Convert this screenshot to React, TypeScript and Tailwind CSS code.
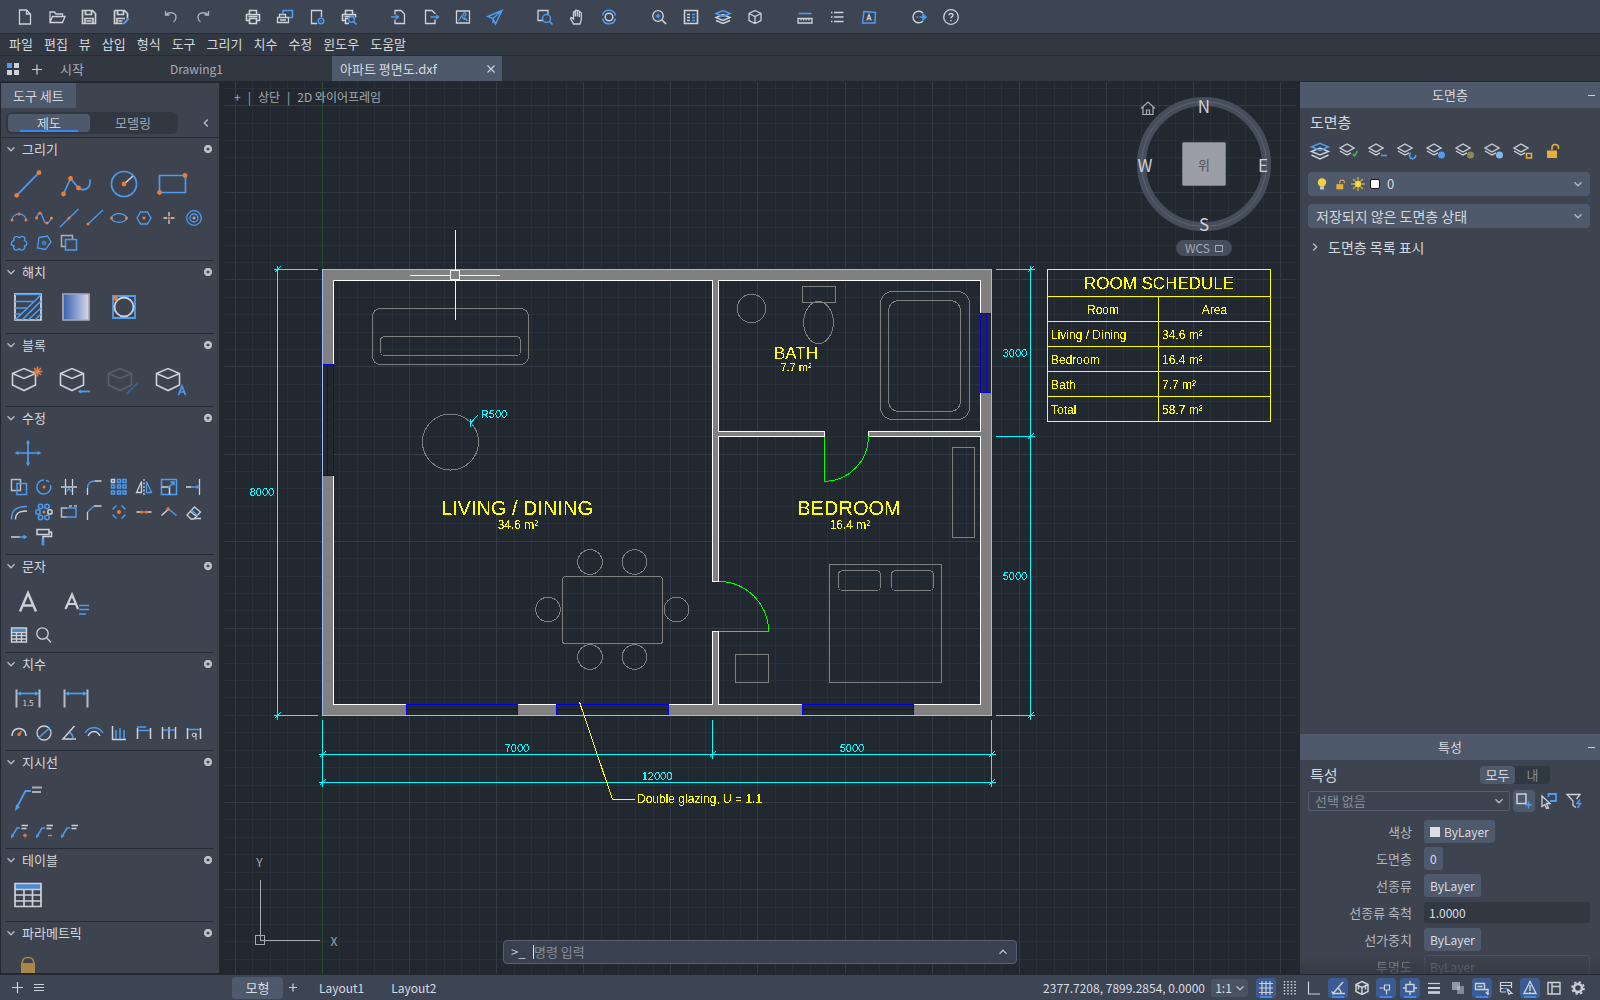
import { useState, type ReactNode } from "react";

const W = "#cdd2d9";
const B = "#4c9cf0";
const O = "#f07b36";
const Y = "#e6b03c";

type IconProps = { size?: number; sw?: number; children: ReactNode };

const Icon = ({ size = 16, sw = 1.3, children }: IconProps) => (
  <svg
    width={size}
    height={size}
    viewBox={`0 0 ${size} ${size}`}
    fill="none"
    stroke={W}
    strokeWidth={sw}
    className="shrink-0 overflow-visible"
    aria-hidden="true"
  >
    {children}
  </svg>
);

const Dot = ({ x, y, r = 2.4 }: { x: number; y: number; r?: number }) => (
  <circle cx={x} cy={y} r={r} fill={O} stroke="none" />
);

const Chevron = ({ d }: { d: string }) => (
  <svg width="8" height="8" viewBox="0 0 8 8" fill="none" stroke="#b4bac4" strokeWidth="1.4" className="shrink-0" aria-hidden="true">
    <path d={d} />
  </svg>
);
const DOWN = "M.5 2.2L4 5.7 7.500 2.200";
const UP = "M.5 5.800L4 2.300 7.500 5.800";
const LEFT = "M5.800.5L2.300 4 5.800 7.500";
const RIGHT = "M2.200.5L5.700 4 2.200 7.500";

/* ---------- top toolbar ---------- */

const toolbar: { label: string; icon: ReactNode }[][] = [
  [
    { label: "새로 만들기", icon: <path d="M2.500 1h7l4 4v10h-11zM9.500 1v4h4" /> },
    { label: "열기", icon: <path d="M1 13.500V3h4.500l1.500 2h6.500v2M1 13.500L3.500 7.500H16l-2.500 6z" /> },
    { label: "저장", icon: <path d="M1.500 1.500h10l3 3v10h-13zM4.500 1.500v4h6v-4M4 14.500v-5h8v5M5.500 12h5" strokeWidth="1.700" /> },
    {
      label: "다른 이름으로 저장",
      icon: (
        <>
          <path d="M1.500 1.500h10l3 3v5M1.500 1.500v13h8M4.500 1.500v4h6v-4M4 14.500v-5h8M5.500 12h4" strokeWidth="1.700" />
          <path d="M15.500 9.500l-5 5.500" stroke={B} strokeWidth="2" />
        </>
      ),
    },
  ],
  [
    { label: "명령 취소", icon: <path d="M2.500 2v4h4M2.500 6C6 2.500 13 3 13 8.500c0 2-1 3.500-2.500 4.500" stroke="#aeb4bd" /> },
    { label: "명령 복구", icon: <path d="M13.500 2v4h-4M13.500 6C10 2.500 3 3 3 8.500c0 2 1 3.500 2.500 4.500" stroke="#aeb4bd" /> },
  ],
  [
    { label: "인쇄", icon: <path d="M4.500 5V1.500h7V5M4 11.500H1.500V5.500h13v6H12M4.500 9.500h7v5h-7zM3.500 7.500h9" strokeWidth="1.600" /> },
    {
      label: "일괄 인쇄",
      icon: (
        <>
          <path d="M2.500 8V5.500h6V8M.5 8.500h11v5H.5zM3 11h6" />
          <path d="M6 5.500V1.500h9.500v7H12" stroke={B} strokeWidth="1.600" />
        </>
      ),
    },
    {
      label: "페이지 설정",
      icon: (
        <>
          <path d="M8 14.500H2.500v-13h10V8" />
          <circle cx="12" cy="12" r="2.800" stroke={B} strokeWidth="1.500" />
          <circle cx="12" cy="12" r=".8" fill={B} stroke="none" />
        </>
      ),
    },
    {
      label: "인쇄 미리보기",
      icon: (
        <>
          <path d="M4.500 5V1.500h7V5M4 11.500H1.500V5.500h13v3M7 9.500H4.500v5H8M3.500 7.500h9" strokeWidth="1.600" />
          <circle cx="10.500" cy="10.500" r="2.800" stroke={B} />
          <path d="M12.500 12.500l3 3" stroke={B} strokeWidth="1.700" />
        </>
      ),
    },
  ],
  [
    {
      label: "가져오기",
      icon: (
        <>
          <path d="M4 5.500v-4h6l3.500 3.500v9.500H4v-4" />
          <path d="M0 8h7.500M5 6l2.500 2L5 10" stroke={B} />
        </>
      ),
    },
    {
      label: "내보내기",
      icon: (
        <>
          <path d="M12 5V4.500l-3-3H2.500v13H12v-4" />
          <path d="M7.500 8h8M13 6l2.500 2-2.500 2" stroke={B} />
        </>
      ),
    },
    {
      label: "이미지",
      icon: (
        <>
          <path d="M1.500 2h13v12h-13z" />
          <path d="M3.500 12l3-5 2.500 3 1-1 2.500 3" stroke={B} />
          <circle cx="9.500" cy="5.500" r="1.500" stroke={B} />
        </>
      ),
    },
    { label: "보내기", icon: <path d="M15 1.500L.8 7.500l5.200 2 2.500 5.500zM15 1.500L6 9.500v4.500" stroke={B} strokeWidth="1.500" /> },
  ],
  [
    {
      label: "줌 윈도우",
      icon: (
        <>
          <path d="M6 11.500H1v-10h10V5" />
          <circle cx="9.500" cy="9.500" r="4" stroke={B} strokeWidth="1.500" />
          <path d="M12.500 12.500l3 3" stroke={B} strokeWidth="1.700" />
        </>
      ),
    },
    { label: "초점이동", icon: <path d="M4.500 15C3.500 12 2 11 1.500 9.500c0-1.500 1.500-1 3 .5V3.500c0-1.300 1.800-1.300 1.800 0V7.500V2c0-1.300 2-1.300 2 0v5.500V2.500c0-1.300 2-1.300 2 0v5.500V4c0-1.300 2-1.300 2 0v6c0 2-.8 3-1.300 5z" /> },
    {
      label: "궤도",
      icon: (
        <>
          <circle cx="8" cy="8" r="3.800" strokeWidth="1.500" />
          <path d="M1.500 6.500C3-.5 13-.5 14.500 6.500M1.500 9.500c1.500 7 11.500 7 13 0" stroke={B} strokeWidth="1.500" />
        </>
      ),
    },
  ],
  [
    {
      label: "줌 확대",
      icon: (
        <>
          <circle cx="7" cy="7" r="5.300" />
          <path d="M11 11l4 4" strokeWidth="1.700" />
          <path d="M4.500 7h5M7 4.500v5" stroke={B} strokeWidth="1.500" />
        </>
      ),
    },
    {
      label: "특성",
      icon: (
        <>
          <path d="M1.500 1.500h13v13h-13z" strokeWidth="1.600" />
          <path d="M4 5.500h3M4 8.500h3M4 11.500h3" />
          <path d="M9 5.500h3M9 8.500h3M9 11.500h3" stroke={B} />
        </>
      ),
    },
    {
      label: "도면층",
      icon: (
        <>
          <path d="M1 8.500l7 3 7-3-7-3zM1 11.500l7 3 7-3" strokeWidth="1.500" />
          <path d="M1 4.500l7-3 7 3-7 3z" stroke={B} strokeWidth="1.600" />
        </>
      ),
    },
    { label: "블록", icon: <path d="M8 1.500l6 3v7l-6 3-6-3v-7zM2 4.500l6 3 6-3M8 7.500v7" /> },
  ],
  [
    {
      label: "측정",
      icon: (
        <>
          <path d="M1.500 4.500h13" stroke={B} strokeWidth="1.600" />
          <path d="M1 9.500h14v4.500H1zM4 9.500v2M6.700 9.500v2M9.300 9.500v2M12 9.500v2" />
        </>
      ),
    },
    { label: "목록", icon: <path d="M2 3.500h1.500M2 8h1.500M2 12.500h1.500M5 3.500h9.500M5 8h9.500M5 12.500h9.500" strokeWidth="1.400" /> },
    {
      label: "문자 스타일",
      icon: (
        <>
          <path d="M3 2.500l11.500 1-.5 10.500H1.500z" stroke={B} strokeWidth="1.500" />
          <path d="M5.800 11.500L8 5.500l2.200 6M6.500 9.700h3" strokeWidth="1.200" />
        </>
      ),
    },
  ],
  [
    {
      label: "공유",
      icon: (
        <>
          <path d="M12 4A5.800 5.800 0 1 0 12 12" strokeWidth="1.400" />
          <path d="M5.500 8h1.500M8.500 8h6M12 5.200L15 8l-3 2.800z" stroke={B} strokeWidth="1.500" />
        </>
      ),
    },
    {
      label: "도움말",
      icon: (
        <>
          <circle cx="8" cy="8" r="7.300" />
          <path d="M6 6.300c0-2.500 4-2.500 4 0 0 1.500-2 1.300-2 3M8 11v1.300" strokeWidth="1.400" />
        </>
      ),
    },
  ],
];

const menus = ["파일", "편집", "뷰", "삽입", "형식", "도구", "그리기", "치수", "수정", "윈도우", "도움말"];

/* ---------- tool set icons (28px and 18px) ---------- */

const Cube = ({ dim, children }: { dim?: boolean; children: ReactNode }) => (
  <Icon size={28} sw={1.6}>
    <g stroke={dim ? "#59616d" : W}>
      <path d="M-1.500 7.500l11.500-5 11.500 5v11.500l-11.500 5.500L-1.500 19zM-1.500 7.500L10 12.500l11.500-5" />
    </g>
    {children}
  </Icon>
);

const Leader = ({ tail }: { tail?: "+" | "-" }) => (
  <Icon size={18}>
    <path d="M1.500 15.500L7 6h3" stroke={B} strokeWidth="1.500" />
    <path d="M1 16l.5-4 3 2z" fill={B} stroke="none" />
    <path d="M11.500 3.500H18M11.500 6.500h5" />
    {tail && <path d={tail === "+" ? "M13 13.500h4M15 11.500v4" : "M13 13.500h4"} stroke={O} />}
  </Icon>
);

const DimBox = ({ children }: { children?: ReactNode }) => (
  <Icon size={28} sw={2}>
    <path d="M2.500 4.500v18M25.500 4.500v18" stroke="#b5bac3" />
    <path d="M3 8.500h22" stroke={B} strokeWidth="1.700" />
    <path d="M3 8.500l4-2.200v4.400zM25 8.500l-4-2.200v4.400z" fill={B} stroke="none" />
    {children}
  </Icon>
);

const TableIcon = ({ big }: { big?: boolean }) =>
  big ? (
    <Icon size={28} sw={1.7}>
      <path d="M1 3h26v5H1z" fill={B} fillOpacity=".8" stroke="none" />
      <path d="M1 2.500h26v23H1zM1 8.500h26M1 14h26M1 20h26M10 8.500v17M18.500 8.500v17" />
    </Icon>
  ) : (
    <Icon size={18} sw={1.4}>
      <path d="M1 2.500h16v3H1z" fill={B} fillOpacity=".8" stroke="none" />
      <path d="M1.500 2h15v14h-15zM1 6.500h16M1 9.500h16M1 13h16M6.500 6.500v9.500M11.500 6.500v9.500" />
    </Icon>
  );

type Section = { title: string; big: ReactNode[]; small: ReactNode[] };

const sections: Section[] = [
  {
    title: "그리기",
    big: [
      <Icon size={28}>
        <path d="M2.700 25.300L25 2.700" stroke={B} strokeWidth="1.700" />
        <Dot x={2.7} y={25.3} />
        <Dot x={25} y={2.7} />
      </Icon>,
      <Icon size={28}>
        <path d="M1.500 24L8.500 8.500l8 9.500c5 3.500 12.500 1.500 11.500-8.500" stroke={B} strokeWidth="1.700" />
        <Dot x={1.5} y={24} />
        <Dot x={8.5} y={8.5} />
        <Dot x={16.5} y={18} />
      </Icon>,
      <Icon size={28}>
        <circle cx="14" cy="14" r="12.500" stroke={B} strokeWidth="1.700" />
        <path d="M14 14l9-8" strokeWidth="1.600" />
        <Dot x={14} y={14} />
      </Icon>,
      <Icon size={28}>
        <path d="M1.500 5.500h26v17h-26z" stroke={B} strokeWidth="1.700" />
        <Dot x={27} y={5.5} />
        <Dot x={1.5} y={22.5} />
      </Icon>,
    ],
    small: [
      <Icon size={18}>
        <path d="M2 11c1-8 13-8 14 0" stroke={B} />
        <Dot x={2} y={11} r={1.5} />
        <Dot x={9} y={5} r={1.5} />
        <Dot x={16} y={11} r={1.5} />
      </Icon>,
      <Icon size={18}>
        <path d="M1.500 9C4 2 6 2 8 9s5 7 8.500 0" stroke={B} />
        <Dot x={1.5} y={9} r={1.5} />
        <Dot x={5} y={4} r={1.5} />
        <Dot x={12} y={14} r={1.5} />
        <Dot x={16.5} y={9} r={1.5} />
      </Icon>,
      <Icon size={18}>
        <path d="M0 18L18.500 0" stroke={B} />
        <Dot x={9} y={9} r={1.5} />
      </Icon>,
      <Icon size={18}>
        <path d="M3 15L18 1" stroke={B} />
        <Dot x={3} y={15} r={1.5} />
      </Icon>,
      <Icon size={18}>
        <ellipse cx="9" cy="9" rx="7.500" ry="4.300" stroke={B} />
        <Dot x={1.5} y={9} r={1.5} />
        <Dot x={16.5} y={9} r={1.5} />
      </Icon>,
      <Icon size={18}>
        <path d="M2 9l3.500-6h7L16 9l-3.500 6h-7z" stroke={B} />
        <Dot x={9} y={9} r={1.5} />
      </Icon>,
      <Icon size={18}>
        <path d="M9 3v4M9 11v4M3.500 9h3.500M11 9h3.500" />
        <Dot x={9} y={9} r={1.5} />
      </Icon>,
      <Icon size={18}>
        <circle cx="9" cy="9" r="7.300" stroke={B} />
        <circle cx="9" cy="9" r="4" stroke={B} />
        <path d="M9 7.500v3M7.500 9h3" strokeWidth="1" />
      </Icon>,
      <Icon size={18}>
        <path
          d="M4 6.500C2.500 3.500 6.500 1 8.500 3.500 9 3.800 9.500 3.800 10 3.500c2-2.500 6-.5 4.500 3 3 1 3 5 0 5.500 1 3.500-3 5.500-5 3H8.500c-2 2.500-6 .5-4.500-3-3.500-.5-3.500-4.500 0-5.500z"
          stroke={B}
        />
      </Icon>,
      <Icon size={18}>
        <path d="M4 3.500L12.500 2 16 8l-5.500 7.500L2.500 14z" stroke={B} />
        <circle cx="9" cy="9" r="2.500" fill={B} fillOpacity=".55" stroke="none" />
      </Icon>,
      <Icon size={18} sw={1.5}>
        <path d="M5.500 12.500H1.500v-11h11v4" stroke="#aab0b9" />
        <path d="M5.500 5.500h11v10.500h-11z" stroke={B} />
      </Icon>,
    ],
  },
  {
    title: "해치",
    big: [
      <Icon size={28} sw={1.7}>
        <path d="M1 1h26v26H1z" stroke="#d8dde4" />
        <path d="M1 1.500h26M1 8.500h20M1 15h13M1 21h7M1 27L27 2M8 27L27 8M14 27L27 15M21 27l6-6" stroke={B} />
      </Icon>,
      <Icon size={28} sw={1.7}>
        <defs>
          <linearGradient id="hatch-gradient">
            <stop offset="0" stopColor="#3560b0" />
            <stop offset="1" stopColor="#dcd8ee" />
          </linearGradient>
        </defs>
        <path d="M1 1h26v26H1z" fill="url(#hatch-gradient)" stroke="#a6abb5" />
      </Icon>,
      <Icon size={28} sw={1.8}>
        <path d="M3 3h22v22H3z" stroke={B} />
        <circle cx="14" cy="14" r="9.500" />
        <Dot x={5.5} y={5.5} />
      </Icon>,
    ],
    small: [],
  },
  {
    title: "블록",
    big: [
      <Cube>
        <path d="M23.500.5v10M18.500 5.500h10M20 2l7 7M27 2l-7 7" stroke={O} strokeWidth="1.500" />
      </Cube>,
      <Cube>
        <path d="M17 25.500h11" stroke={B} strokeWidth="1.800" />
        <path d="M15.500 25.500l4-2v4z" fill={B} stroke="none" />
      </Cube>,
      <Cube dim>
        <path d="M16.500 28L28 16.500" stroke="#3f6291" strokeWidth="1.700" />
      </Cube>,
      <Cube>
        <path d="M20.500 29l3.500-9 3.500 9M21.700 26h4.600" stroke={B} strokeWidth="1.700" />
      </Cube>,
    ],
    small: [],
  },
  {
    title: "수정",
    big: [
      <Icon size={28}>
        <path d="M14 3v22M3 14h22" stroke={B} strokeWidth="1.700" />
        <path d="M14 .5l2 4h-4zM14 27.500l2-4h-4zM.5 14l4-2v4zM27.500 14l-4-2v4z" fill={B} stroke="none" />
      </Icon>,
    ],
    small: [
      <Icon size={18} sw={1.5}>
        <path d="M1.500 1.500h9v11h-9z" stroke="#b7bcc5" />
        <path d="M7 5.500h9.500v11H7z" stroke={B} />
      </Icon>,
      <Icon size={18}>
        <path d="M9 2A7 7 0 1 0 15.500 7M11 2.300A7 7 0 0 1 14 4" stroke={B} strokeWidth="1.500" />
        <Dot x={9} y={9} r={1.5} />
      </Icon>,
      <Icon size={18}>
        <path d="M1 9h16M5.500 1v7M12.500 1v7M5.500 10v7M12.500 10v7" />
        <path d="M6.500 13.500L9 10.500l2.500 3" stroke={B} />
      </Icon>,
      <Icon size={18}>
        <path d="M2.500 17V10M10 3h6.500" />
        <path d="M2.500 10c0-4.500 3-7 7.500-7" stroke={B} />
      </Icon>,
      <Icon size={18} sw={1.5}>
        <path
          d="M7.500 1.500h3v3h-3zM13 1.500h3v3h-3zM1.500 7h3v3h-3zM7.500 7h3v3h-3zM13 7h3v3h-3zM1.500 13h3v3h-3zM7.500 13h3v3h-3zM13 13h3v3h-3z"
          stroke={B}
        />
        <path d="M1.500 1.500h3v3h-3z" />
      </Icon>,
      <Icon size={18}>
        <path d="M6.500 3.500v11H1.500z" />
        <path d="M11.500 3.500v11h5z" stroke={B} />
        <path d="M9 1v16" strokeDasharray="2 1.500" />
      </Icon>,
      <Icon size={18} sw={1.5}>
        <path d="M1.500 1.500h15v15h-15z" stroke={B} />
        <path d="M1.500 9h8v7.500" />
        <path d="M8 10l6-6M10.500 4H14v3.500" stroke={B} />
      </Icon>,
      <Icon size={18}>
        <path d="M1 9h5M14.500 1v16" />
        <path d="M6 9h8M11.500 7.500l2.500 1.500-2.500 1.500" stroke={B} />
      </Icon>,
      <Icon size={18}>
        <path d="M1.500 16.500C1.500 8 5 3.500 17 3.500" stroke={B} strokeWidth="1.500" />
        <path d="M5.500 16.500c0-6 3-8.500 11.500-8.500" />
      </Icon>,
      <Icon size={18}>
        <g stroke={B} strokeWidth="1.500">
          <circle cx="3" cy="9" r="2.200" />
          <circle cx="5.500" cy="3.500" r="2.200" />
          <circle cx="12" cy="3.500" r="2.200" />
          <circle cx="5.500" cy="14.500" r="2.200" />
          <circle cx="12" cy="14.500" r="2.200" />
        </g>
        <circle cx="15" cy="9" r="2.200" strokeWidth="1.500" />
        <Dot x={9} y={9} r={1.5} />
      </Icon>,
      <Icon size={18} sw={1.5}>
        <path d="M7 5H1.500v9H7M9 3h3M14 3h3" stroke="#b7bcc5" />
        <path d="M6 14h10V5H7" stroke={B} />
      </Icon>,
      <Icon size={18}>
        <path d="M2.500 17V9M9 3h7.500" />
        <path d="M2.500 9L9 3" stroke={B} />
      </Icon>,
      <Icon size={18}>
        <path d="M2.500 6.500l4-4M11.500 2.500l4 4M2.500 11.500l4 4M11.500 15.500l4-4" stroke={B} strokeWidth="1.500" />
        <Dot x={9} y={9} r={2} />
      </Icon>,
      <Icon size={18}>
        <path d="M1.500 9h4M12.500 9h4" />
        <path d="M6 9h6" stroke={O} />
        <Dot x={6.5} y={9} r={1.5} />
        <Dot x={11.5} y={9} r={1.5} />
      </Icon>,
      <Icon size={18}>
        <path d="M1.500 12.500L8.500 6" strokeWidth="1.500" />
        <path d="M8.500 6l8 6.500" stroke={B} strokeWidth="1.500" />
        <Dot x={8} y={6} r={1.7} />
      </Icon>,
      <Icon size={18}>
        <path d="M9.500 4l6 5-6.500 7H6l-4-4zM5.500 8.500l6 5M9 15.500h7" />
        <path d="M6.500 7l6 5.500" stroke={B} />
      </Icon>,
      <Icon size={18}>
        <path d="M1 9h9" strokeWidth="1.500" />
        <path d="M9 9h7.500M13.500 7.500L16 9l-2.500 1.500" stroke={B} strokeWidth="1.500" />
      </Icon>,
      <Icon size={18} sw={1.5}>
        <path d="M2 1.500h12v5H2zM14 4h2.500v4.500H8V11" />
        <path d="M8 10.500v7" stroke={B} strokeWidth="2.600" />
      </Icon>,
    ],
  },
  {
    title: "문자",
    big: [
      <Icon size={28} sw={2.4}>
        <path d="M6 24.500L14 6l8 18.500M8.500 18.500h11" />
      </Icon>,
      <Icon size={28} sw={2.2}>
        <path d="M3.500 22L10 7.500 16 22M6 17h8" />
        <path d="M17 18.500h10M17 22.500h10M17 27h7" stroke={B} strokeWidth="1.700" />
      </Icon>,
    ],
    small: [
      <TableIcon />,
      <Icon size={18}>
        <circle cx="7.500" cy="7.500" r="5.700" />
        <path d="M11.500 11.500l4.500 5" />
      </Icon>,
    ],
  },
  {
    title: "치수",
    big: [
      <DimBox>
        <text x="14" y="21" textAnchor="middle" fontSize="8" fill={W} stroke="none">
          1.5
        </text>
      </DimBox>,
      <DimBox />,
    ],
    small: [
      <Icon size={18} sw={1.5}>
        <path d="M2 12C1.500 2 16.500 2 16 12" />
        <path d="M9 10l2.500-3" stroke={O} />
        <Dot x={9} y={10.5} r={1.7} />
      </Icon>,
      <Icon size={18}>
        <circle cx="9" cy="9" r="7" />
        <path d="M3.500 14L14.500 4" stroke={B} strokeWidth="1.500" />
      </Icon>,
      <Icon size={18} sw={1.5}>
        <path d="M14.500 2L3 15h13" />
        <path d="M9.500 8.500c2.500 1.500 3.500 3 3.500 6" stroke={B} />
      </Icon>,
      <Icon size={18} sw={1.5}>
        <path d="M0 9c4-7 14-7 18 0" stroke={B} />
        <path d="M3 12c3-6 9-6 12 0" />
      </Icon>,
      <Icon size={18} sw={1.5}>
        <path d="M2.500 2v13.500H16" />
        <path d="M6 6v9M10 4v11M14 6v9" stroke={B} />
      </Icon>,
      <Icon size={18} sw={1.5}>
        <path d="M2.500 4v11M15.500 4v11" />
        <path d="M2 3h9M3 6.500h12" stroke={B} />
      </Icon>,
      <Icon size={18} sw={1.5}>
        <path d="M2.500 3v12M9 3v12M15.500 3v12" />
        <path d="M3 6h12" stroke={B} />
      </Icon>,
      <Icon size={18} sw={1.5}>
        <path d="M2.500 4v11M15.500 4v11" />
        <path d="M3 5.500h12" stroke={B} />
        <circle cx="9" cy="11" r="1.800" strokeWidth="1" />
        <path d="M11 9v7" strokeWidth="1" />
      </Icon>,
    ],
  },
  {
    title: "지시선",
    big: [
      <Icon size={28} sw={1.8}>
        <path d="M3 24L11.500 8H17" stroke={B} />
        <path d="M1 28l1-6.500 4 2.500z" fill={B} stroke="none" />
        <path d="M18 4.500h10M18 9h9" stroke="#aab0b9" />
      </Icon>,
    ],
    small: [<Leader tail="+" />, <Leader tail="-" />, <Leader />],
  },
  { title: "테이블", big: [<TableIcon big />], small: [] },
  {
    title: "파라메트릭",
    big: [
      <Icon size={28} sw={1.7}>
        <path d="M8 9.500c0-8 12-8 12 0" stroke="#a98744" />
        <path d="M7 9h14v11.500H7z" fill="#a98744" stroke="none" />
      </Icon>,
    ],
    small: [],
  },
];

const ToolSection = ({ title, big, small }: Section) => (
  <section className="flex shrink-0 flex-col">
    <div className="flex h-6 items-center pb-0.5 pl-1.5 pr-[7px]">
      <button type="button" className="flex flex-1 items-center gap-[7px] text-left">
        <Chevron d={DOWN} />
        {title}
      </button>
      <button type="button" aria-label={`${title} 설정`}>
        <svg width="8" height="8" viewBox="0 0 8 8" fill="none" stroke="#bcc1c9" aria-hidden="true">
          <path d="M2.800 1.400h2.400L6.600 2.800v2.400L5.200 6.600H2.800L1.400 5.200V2.800z" strokeWidth="2.600" />
        </svg>
      </button>
    </div>
    <div className="flex h-[43px] pl-[3px]">
      {big.map((icon, i) => (
        <button key={i} type="button" className="grid w-12 place-items-center" aria-label={`${title} ${i + 1}`}>
          {icon}
        </button>
      ))}
    </div>
    <div className="flex flex-wrap pl-[5px]">
      {small.map((icon, i) => (
        <button key={i} type="button" className="grid size-[25px] place-items-center" aria-label={`${title} 도구 ${i + 1}`}>
          {icon}
        </button>
      ))}
    </div>
    <div className="mx-[5px] mt-[5px] h-px bg-[#262c36]" />
  </section>
);

const Sidebar = () => {
  const [tab, setTab] = useState("제도");
  return (
    <aside className="my-px ml-px flex w-[218px] shrink-0 flex-col overflow-hidden bg-[#3d4450]">
      <div className="flex h-[25px] shrink-0">
        <button type="button" className="bg-[#4e596b] px-3">
          도구 세트
        </button>
      </div>
      <div className="flex h-[30px] shrink-0 items-center justify-between border-b border-[#262c36] pl-[5px] pr-[9px]">
        <div className="grid h-[22px] w-[172px] grid-cols-[82px_1fr] rounded-md bg-[#323842] p-0.5">
          {["제도", "모델링"].map((name) => (
            <button
              key={name}
              type="button"
              onClick={() => setTab(name)}
              className={
                tab === name
                  ? "relative rounded-[4px] bg-[#4e596b] leading-4 after:absolute after:inset-x-3 after:bottom-0 after:h-0.5 after:bg-[#3b86f6]"
                  : "leading-4 text-[#a3a9b3]"
              }
            >
              {name}
            </button>
          ))}
        </div>
        <button type="button" aria-label="접기">
          <Chevron d={LEFT} />
        </button>
      </div>
      {sections.map((s) => (
        <ToolSection key={s.title} {...s} />
      ))}
    </aside>
  );
};

/* ---------- drawing ---------- */

const STEP = 17.42;
const gridX = Array.from({ length: 140 }, (_, i) => i - 6);
const gridY = Array.from({ length: 90 }, (_, i) => i - 54);

const Grid = () => (
  <g strokeWidth="1">
    {[false, true].map((major) => (
      <g key={String(major)} stroke={major ? "#333b47" : "#29303a"}>
        {gridX
          .filter((i) => (i % 5 === 0) === major)
          .map((i) => (
            <path key={`x${i}`} d={`M${Math.floor(322.4 + i * STEP) + 0.5} 82v2000`} />
          ))}
        {gridY
          .filter((i) => (i % 5 === 0) === major)
          .map((i) => (
            <path key={`y${i}`} d={`M224 ${Math.floor(715.4 + i * STEP) + 0.5}h3000`} />
          ))}
      </g>
    ))}
    <path d="M224 715.500h3000" stroke="#4b262b" />
    <path d="M322.500 82v2000" stroke="#2a4a2b" />
  </g>
);

const Tick = ({ x, y }: { x: number; y: number }) => (
  <path d={`M${x - 4} ${y}h8M${x} ${y - 4}v8M${x - 3} ${y + 3}l6 -6`} />
);

const chairs = [
  [590, 562],
  [634.5, 562],
  [548, 609.5],
  [676.5, 609.5],
  [590, 657],
  [634.5, 657],
];

const FloorPlan = () => (
  <>
    <g stroke="none" fill="#808080">
      <path d="M322 269h670v447H322zM334 281v423h647V281z" fillRule="evenodd" />
      <path d="M713 281h5v300h-5zM713 632h5v73h-5zM718 432h106v4H718zM869 432h112v4H869z" />
    </g>
    <g fill="none" stroke="#fff">
      <path d="M712.500 280.500H333.500V704.500H712.500V631.500h6V704.500H980.500V436.500H868.500V431.500H980.500V280.500H718.500V431.500H824.500V436.500H718.500V581.500H712.500z" />
    </g>
    {/* windows */}
    <g fill="#212830" stroke="#0000e0">
      <path d="M322.500 364.500h11v111h-11zM327.500 364.500v111" />
      <path d="M980.500 313.500h11v79h-11zM986.500 313.500v79" />
      <path d="M406.500 704.500h111v11h-111zM406.500 709.500h111" />
      <path d="M556.500 704.500h112v11h-112zM556.500 709.500h112" />
      <path d="M802.500 704.500h111v11h-111zM802.500 709.500h111" />
    </g>
    <path d="M322.500 269.500h669v446h-669z" fill="none" stroke="#9dbcf5" />
    {/* doors */}
    <g fill="none" stroke="#00ff00">
      <path d="M718.500 631.500h50A50 50 0 0 0 718.500 581.500" />
      <path d="M824.500 436.500v45A45 45 0 0 0 868.500 436.500" />
    </g>
    {/* furniture */}
    <g fill="none" stroke="#808080">
      <rect x="372.500" y="308.500" width="156" height="56" rx="8" />
      <rect x="380.500" y="336.500" width="140" height="19" rx="4" />
      <circle cx="450.500" cy="442" r="28" />
      <rect x="562.500" y="576.500" width="100" height="67" rx="3" />
      {chairs.map(([x, y]) => (
        <circle key={`${x}-${y}`} cx={x} cy={y} r="12.300" />
      ))}
      <circle cx="751.500" cy="308.500" r="14.300" />
      <rect x="802.500" y="286.500" width="33" height="16" />
      <ellipse cx="818.500" cy="322.500" rx="14.800" ry="21" />
      <rect x="880.500" y="291.500" width="89" height="128" rx="12" />
      <rect x="888.500" y="300.500" width="72" height="111" rx="10" />
      <rect x="952.500" y="447.500" width="22" height="90" />
      <rect x="829.500" y="564.500" width="112" height="118" />
      <rect x="838.500" y="570.500" width="42" height="20" rx="4" />
      <rect x="891.500" y="570.500" width="42" height="20" rx="4" />
      <rect x="735.500" y="654.500" width="33" height="28" />
    </g>
    {/* dimensions */}
    <g fill="none" stroke="#00ffff">
      <path d="M277.500 269.500v446M277.500 269.500H318M277.500 715.500H318" />
      <path d="M1030.500 269.500v446M996 269.500h34M996 436.500h34M996 715.500h34" />
      <path d="M322.500 720v62M991.500 720v62M712.500 720v34M322.500 754.500h669M322.500 782.500h669" />
      <path d="M478 415l-7 7.500M470.500 419v8" />
      <Tick x={277.5} y={269.5} />
      <Tick x={277.5} y={715.5} />
      <Tick x={1030.5} y={269.5} />
      <Tick x={1030.5} y={436.5} />
      <Tick x={1030.5} y={715.5} />
      <Tick x={322.5} y={754.5} />
      <Tick x={712.5} y={754.5} />
      <Tick x={991.5} y={754.5} />
      <Tick x={322.5} y={782.5} />
      <Tick x={991.5} y={782.5} />
    </g>
    <path d="M579.500 702l33 97.500H635" fill="none" stroke="#ffff00" />
  </>
);

const PlanText = () => (
  <g className="font-['Liberation_Sans',Arial,sans-serif]" textAnchor="middle" filter="url(#crisp)">
    <g fill="#00ffff" fontSize="11">
      <text x="262" y="496">8000</text>
      <text x="1015" y="357">3000</text>
      <text x="1015" y="580">5000</text>
      <text x="517" y="752">7000</text>
      <text x="852" y="752">5000</text>
      <text x="657" y="780">12000</text>
      <text x="494" y="418">R500</text>
    </g>
    <g fill="#ffff00" fontSize="12">
      <text x="517" y="515" fontSize="20">LIVING / DINING</text>
      <text x="518" y="529">34.6 m²</text>
      <text x="849" y="515" fontSize="20">BEDROOM</text>
      <text x="850" y="529">16.4 m²</text>
      <text x="796" y="359" fontSize="17">BATH</text>
      <text x="796" y="371" fontSize="11">7.7 m²</text>
      <text x="637" y="803" textAnchor="start">Double glazing, U = 1.1</text>
    </g>
  </g>
);

const rooms = [
  ["Living / Dining", "34.6 m²"],
  ["Bedroom", "16.4 m²"],
  ["Bath", "7.7 m²"],
  ["Total", "58.7 m²"],
];

const RoomSchedule = () => (
  <table className="absolute left-[823px] top-[187px] w-[224px] table-fixed border-collapse font-['Liberation_Sans',Arial,sans-serif] text-xs leading-4 text-[#ffff00] [filter:url(#crisp)] [&_td]:border [&_td]:border-[#ffff00] [&_td]:pl-[3px] [&_td]:pt-0.5 [&_th]:border [&_th]:border-[#ffff00] [&_th]:pt-0.5 [&_th]:font-normal">
    <colgroup>
      <col className="w-[111px]" />
      <col />
    </colgroup>
    <thead>
      <tr className="h-[27px]">
        <th colSpan={2} className="text-[17px]">
          ROOM SCHEDULE
        </th>
      </tr>
      <tr className="h-[25px]">
        <th>Room</th>
        <th>Area</th>
      </tr>
    </thead>
    <tbody>
      {rooms.map(([name, area]) => (
        <tr key={name} className="h-[25px]">
          <td>{name}</td>
          <td>{area}</td>
        </tr>
      ))}
    </tbody>
  </table>
);

const Compass = () => (
  <div className="absolute right-6 top-2 flex w-[136px] flex-col items-center">
    <svg width="136" height="150" viewBox="0 -7 136 150" className="text-[17px]" fill={W} textAnchor="middle" aria-label="뷰 큐브">
      <circle cx="68" cy="67" r="62.500" fill="none" stroke="#474e5b" strokeWidth="9" />
      <circle cx="68" cy="67" r="62.500" fill="none" stroke="#5b6473" strokeWidth="1" />
      <text x="68" y="16">N</text>
      <text x="68" y="134">S</text>
      <text x="9" y="75">W</text>
      <text x="127" y="75">E</text>
      <rect x="46.500" y="45.500" width="43" height="43" rx="1" fill="#9b9da7" stroke="#7c7f8a" />
      <text x="68" y="73" fontSize="13" fill="#50535c">위</text>
      <path d="M5 11.500l7-6.500 7 6.500M7 10v7.500h10V10M10.500 17.500V13h3v4.500" fill="none" stroke="#a9aeb7" strokeWidth="1.200" />
    </svg>
    <button type="button" className="flex h-4 items-center gap-[5px] rounded-full bg-[#474e5b] px-[9px] text-xs text-[#a5abb6]">
      WCS
      <span className="h-[7px] w-2 border border-[#a5abb6]" />
    </button>
  </div>
);

const Canvas = () => (
  <main className="relative ml-[5px] mr-1 min-w-0 flex-1 overflow-hidden bg-[#212830]">
    <svg className="absolute inset-0 size-full" aria-label="평면도">
      <defs>
        <filter id="crisp" x="-5%" y="-5%" width="110%" height="110%" colorInterpolationFilters="sRGB">
          <feComponentTransfer>
            <feFuncA type="discrete" tableValues="0 1" />
          </feComponentTransfer>
        </filter>
      </defs>
      <g transform="translate(-224 -82)">
        <g shapeRendering="crispEdges">
          <Grid />
          <FloorPlan />
          <g fill="none" stroke="#a4aab2">
            <path d="M260.500 880v60.500H320M255.500 935.500h9v9h-9z" />
          </g>
          <g fill="none" stroke="#f2f2f2">
            <path d="M455.500 230v90M410 275.500h90" />
            <rect x="450.500" y="270.500" width="9" height="9" fill="#808080" />
          </g>
        </g>
        <PlanText />
        <g fill="#a4aab2" fontSize="12" textAnchor="middle">
          <text x="259.500" y="867">Y</text>
          <text x="334" y="946">X</text>
        </g>
      </g>
    </svg>
    <RoomSchedule />
    <p className="absolute left-2.5 top-1.5 flex gap-[7px] text-xs leading-[18px] text-[#a5abb4]">
      <span>+</span>
      <span>|</span>
      <span>상단</span>
      <span>|</span>
      <span>2D 와이어프레임</span>
    </p>
    <Compass />
    <form className="absolute bottom-2.5 left-1/2 flex h-6 w-[514px] -translate-x-1/2 items-center rounded border border-[#566072] bg-[#394150] pl-[7px] pr-[9px]">
      <label htmlFor="command" className="w-[22px] text-[#c3c8d0]">
        &gt;_
      </label>
      <input
        id="command"
        placeholder="명령 입력"
        className="h-[14px] min-w-0 flex-1 border-l border-[#e5e8ec] bg-transparent outline-none placeholder:text-[#858c98]"
      />
      <button type="button" aria-label="펼치기">
        <Chevron d={UP} />
      </button>
    </form>
  </main>
);

/* ---------- right panels ---------- */

const layerBadges: { label: string; badge: ReactNode }[] = [
  { label: "현재로 설정", badge: <path d="M13 12l1.500 2 3-5" stroke="#4fae54" strokeWidth="1.500" /> },
  { label: "끄기", badge: <path d="M12 13.500h6" stroke={B} strokeWidth="1.600" /> },
  { label: "이전", badge: <path d="M13 11a3 3 0 1 0 4.500 2" stroke={B} strokeWidth="1.600" /> },
  { label: "분리", badge: <circle cx="14.500" cy="13" r="3.500" fill={B} stroke="none" /> },
  { label: "분리 해제", badge: <circle cx="14.500" cy="13" r="3.500" fill="#8b8757" stroke="none" /> },
  { label: "동결", badge: <circle cx="14.500" cy="13" r="3.500" fill="#84b8ea" stroke="none" /> },
  { label: "잠금", badge: <path d="M12.500 11.500h5v4.500h-5z" stroke={Y} strokeWidth="1.500" fill="#3d4450" /> },
];

const Unlock = ({ size }: { size: number }) => (
  <svg width={size} height={size} viewBox="0 0 16 16" fill="none" aria-hidden="true">
    <path d="M2 7.500h10V15H2z" fill={Y} />
    <path d="M7 7V4.500c0-4 6.500-4 6.500 0V6" stroke={Y} strokeWidth="1.500" />
  </svg>
);

const PanelHeader = ({ title }: { title: string }) => (
  <header className="relative flex h-[26px] shrink-0 items-center justify-center bg-[#4e596b]">
    {title}
    <button type="button" aria-label={`${title} 최소화`} className="absolute right-[5px] h-px w-[7px] bg-[#cdd2d9]" />
  </header>
);

const LayersPanel = () => (
  <section className="flex flex-1 flex-col">
    <PanelHeader title="도면층" />
    <h2 className="mt-[3px] pl-2.5 text-[15px] leading-[22px]">도면층</h2>
    <div className="mt-[5px] flex h-[26px] items-center pl-[5px]">
      <button type="button" aria-label="도면층 특성" className="grid w-[29px] place-items-center">
        <Icon size={18} sw={1.4}>
          <path d="M.5 9.500l8.500-3.500 8.500 3.500-8.500 3.500zM.5 13l8.500 4 8.500-4" />
          <path d="M.5 5L9 1.300 17.500 5 9 8.500z" stroke={B} />
        </Icon>
      </button>
      {layerBadges.map(({ label, badge }) => (
        <button key={label} type="button" aria-label={label} className="grid w-[29px] place-items-center">
          <Icon size={18} sw={1.4}>
            <path d="M0 6l7-4 7 4-7 4zM0 9l7 4 4-2.200" />
            {badge}
          </Icon>
        </button>
      ))}
      <button type="button" aria-label="잠금 해제" className="grid w-[31px] place-items-center">
        <Unlock size={16} />
      </button>
    </div>
    <button type="button" className="mx-2 mr-2.5 mt-2 flex h-6 items-center gap-[7px] rounded bg-[#4e596b] px-2">
      <svg width="12" height="12" viewBox="0 0 12 12" aria-hidden="true">
        <circle cx="6" cy="4.500" r="4.200" fill="#f5cf3d" />
        <path d="M4 8.500h4v3H4z" fill="#c4c8ce" />
      </svg>
      <Unlock size={11} />
      <svg width="14" height="14" viewBox="0 0 14 14" stroke="#c0a548" strokeWidth="1.500" className="-ml-0.5" aria-hidden="true">
        <path d="M7 0v14M0 7h14M2 2l10 10M12 2L2 12" />
        <circle cx="7" cy="7" r="3" fill="#ffd83a" stroke="none" />
      </svg>
      <span className="-ml-0.5 size-2.5 rounded-[2px] border border-[#15181d] bg-white" />
      <span className="flex-1 text-left">0</span>
      <Chevron d={DOWN} />
    </button>
    <button type="button" className="mx-2 mr-2.5 mt-2 flex h-6 items-center justify-between rounded bg-[#4e596b] px-2 text-sm">
      저장되지 않은 도면층 상태
      <Chevron d={DOWN} />
    </button>
    <button type="button" className="mt-2 flex h-[22px] items-center gap-[9px] pl-[11px] text-sm">
      <Chevron d={RIGHT} />
      도면층 목록 표시
    </button>
  </section>
);

const chip = "flex h-[23px] items-center gap-1 rounded-[3px] bg-[#4e596b] px-1.5 text-xs text-[#d9dde2]";

const PropertiesPanel = () => (
  <section className="relative h-[240px] shrink-0 overflow-hidden">
    <PanelHeader title="특성" />
    <div className="mt-1 flex h-[22px] items-center pl-2.5">
      <h2 className="w-[170px] text-[15px]">특성</h2>
      <div className="flex h-[18px] w-[70px] rounded bg-[#323842] leading-4">
        <button type="button" className="flex-1 rounded bg-[#4e596b]">
          모두
        </button>
        <button type="button" className="flex-1 text-[#858c98]">
          내
        </button>
      </div>
    </div>
    <div className="mt-1 flex h-[22px] items-center gap-[3px] pl-2">
      <button type="button" className="flex h-5 w-[202px] items-center justify-between rounded-[2px] border border-[#535e71] px-1.5 text-[#858c98]">
        선택 없음
        <Chevron d={DOWN} />
      </button>
      <button type="button" aria-label="선택에 추가" className="grid size-[22px] place-items-center rounded bg-[#4e596b]">
        <Icon size={16} sw={1.5}>
          <path d="M1 1h9v9.500H1z" />
          <path d="M9 12h7M12.500 8.500v7" stroke={B} />
        </Icon>
      </button>
      <button type="button" aria-label="객체 선택" className="grid size-[22px] place-items-center">
        <Icon size={16}>
          <path d="M9 8h6V1H7.500v3" stroke={B} strokeWidth="1.800" />
          <path d="M1 3l8 7.500H5.500L7.500 15 5.500 15.500 3.800 11.500 1 13.500z" />
        </Icon>
      </button>
      <button type="button" aria-label="신속 선택" className="grid size-[22px] place-items-center">
        <Icon size={16}>
          <path d="M10 14.500l-3-2V8L1 1.500h13L10.500 6" />
          <path d="M14 6.500l-3 4h3.500l-3 4.500" stroke={B} strokeWidth="1.500" />
        </Icon>
      </button>
    </div>
    <div className="mt-2 grid grid-cols-[112px_1fr] items-center gap-x-3 gap-y-1 pr-2.5 text-[#b1b6bf] [&>*]:justify-self-start [&>:nth-child(odd)]:justify-self-end">
      <span>색상</span>
      <button type="button" className={chip}>
        <span className="size-2.5 bg-[#dcdfe4]" />
        ByLayer
      </button>
      <span>도면층</span>
      <button type="button" className={chip}>0</button>
      <span>선종류</span>
      <button type="button" className={chip}>ByLayer</button>
      <label htmlFor="ltscale">선종류 축척</label>
      <div className="flex h-[23px] w-full items-center">
        <input id="ltscale" defaultValue="1.0000" className="h-[21px] w-full rounded-[3px] bg-[#323842] px-[5px] text-xs text-[#d9dde2] outline-none" />
      </div>
      <span>선가중치</span>
      <button type="button" className={chip}>ByLayer</button>
      <label htmlFor="transparency" className="opacity-75">투명도</label>
      <input id="transparency" defaultValue="ByLayer" className="h-[23px] w-full rounded-[3px] border border-[#4a5362] px-[5px] text-xs text-[#747b86] outline-none" />
    </div>
    <div className="pointer-events-none absolute inset-x-0 bottom-0 h-5 bg-gradient-to-b from-transparent to-[#323842]/70" />
  </section>
);

/* ---------- status bar ---------- */

const statusTools: { label: string; on?: boolean; icon: ReactNode }[] = [
  { label: "그리드", on: true, icon: <path d="M4 1v14M8 1v14M12 1v14M1 3.500h14M1 8h14M1 12.500h14" /> },
  { label: "스냅", icon: <path d="M2.500 1v14M6 1v14M9.500 1v14M13 1v14" strokeDasharray="1.500 1.500" strokeWidth="1.500" /> },
  { label: "직교", icon: <path d="M2.500 1.500V14H14" /> },
  { label: "극좌표", on: true, icon: <path d="M13 2L3 13.500h12M8 8c2 1.500 3 3 3 5.500M1.500 11.500l3 3" strokeWidth="1.400" /> },
  { label: "등각투영", icon: <path d="M8 1.500l6 3v7l-6 3-6-3v-7zM2 4.500l6 3 6-3M8 7.500v7M4.500 6v3.500M11.500 6v3.500" strokeWidth="1.500" /> },
  { label: "객체 스냅 추적", on: true, icon: <path d="M1.500 8H6M8.500 10v4.500M6.500 5h5v5h-5z" /> },
  { label: "객체 스냅", on: true, icon: <path d="M4 4.500h8v7H4zM8 1v3.500M8 11.500V15M1 8h3M12 8h3" strokeWidth="1.400" /> },
  {
    label: "선가중치",
    icon: (
      <>
        <path d="M2 3.500h12" />
        <path d="M2 8h12" strokeWidth="2" />
        <path d="M2 12.500h12" strokeWidth="2.600" />
      </>
    ),
  },
  {
    label: "투명도",
    icon: (
      <g stroke="none">
        <path d="M2 2h8v8H2z" fill="#9399a3" />
        <path d="M7 6h7v8H7z" fill="#c9cdd3" fillOpacity=".5" />
      </g>
    ),
  },
  { label: "선택 순환", on: true, icon: <path d="M1.500 3.500h9v6h-9zM3.500 6.500h5M10.500 9.500H14V15M12 12l2 2.500" strokeWidth="1.400" /> },
  {
    label: "빠른 특성",
    icon: (
      <>
        <path d="M2.500 12V2.500h11V8M2.500 5.500h11M2.500 8.500h3M2.500 12H8M9 8.500l5 5h-3v1.500z" />
        <path d="M6.500 8.500H10" stroke={B} />
      </>
    ),
  },
  { label: "주석", on: true, icon: <path d="M8 1.500L14 13.500H2zM8 5v6M8 12v1" strokeWidth="1.400" /> },
  { label: "작업공간", icon: <path d="M2 2.500h12v11.500H2zM6 2.500V14M6 6.500h8" strokeWidth="1.400" /> },
  {
    label: "설정",
    icon: (
      <>
        <circle cx="8" cy="8" r="4" strokeWidth="2.400" />
        <circle cx="8" cy="8" r="6" strokeWidth="1.700" strokeDasharray="2.350 2.350" />
      </>
    ),
  },
];

const StatusBar = () => (
  <footer className="flex h-[26px] shrink-0 items-center border-t border-[#212830] bg-[#3d4452] text-[#d9dde2]">
    <div className="flex w-[232px] items-center gap-1.5 pl-2.5">
      <button type="button" aria-label="추가">
        <Icon sw={1.2}>
          <path d="M2 7.500h11M7.500 2v11" />
        </Icon>
      </button>
      <button type="button" aria-label="메뉴">
        <Icon sw={1.2}>
          <path d="M2 4.500h10M2 7.500h10M2 10.500h10" />
        </Icon>
      </button>
    </div>
    <button type="button" className="h-[22px] w-[51px] rounded-[3px] bg-[#4e596b]">
      모형
    </button>
    <button type="button" aria-label="배치 추가" className="ml-1.5">
      <Icon sw={1.2}>
        <path d="M0 7.500h8M4 3.500v8" />
      </Icon>
    </button>
    <button type="button" className="ml-3.5 text-xs">
      Layout1
    </button>
    <button type="button" className="ml-[27px] text-xs">
      Layout2
    </button>
    <span className="ml-auto text-xs">2377.7208, 7899.2854, 0.0000</span>
    <button type="button" className="ml-1.5 flex h-[18px] w-[37px] items-center justify-center gap-1 rounded-[3px] bg-[#4a5362] text-xs">
      1:1
      <Chevron d={DOWN} />
    </button>
    <div className="ml-1.5 mr-2.5 flex">
      {statusTools.map(({ label, on, icon }) => (
        <button
          key={label}
          type="button"
          aria-label={label}
          aria-pressed={!!on}
          className={
            on
              ? "relative mx-0.5 grid size-5 place-items-center rounded-[3px] bg-[#3b5b92] after:absolute after:inset-x-1 after:bottom-0 after:h-0.5 after:bg-[#3f86f3]"
              : "relative mx-0.5 grid size-5 place-items-center"
          }
        >
          <Icon size={16} sw={1.2}>
            {icon}
          </Icon>
        </button>
      ))}
    </div>
  </footer>
);

const App = () => (
  <div className="flex h-screen flex-col overflow-hidden bg-[#212830] font-['Noto_Sans_CJK_KR',sans-serif] text-[13px] leading-5 text-[#d4d8de]">
    <div role="toolbar" className="flex h-[34px] shrink-0 items-center gap-[18px] border-b border-[#262c36] bg-[#3d4452] pl-[9px]">
      {toolbar.map((group, i) => (
        <div key={i} className="flex">
          {group.map(({ label, icon }) => (
            <button key={label} type="button" aria-label={label} className="grid w-8 place-items-center">
              <Icon>{icon}</Icon>
            </button>
          ))}
        </div>
      ))}
    </div>
    <nav className="flex h-[22px] shrink-0 items-center gap-[11px] border-b border-[#262c36] bg-[#323842] pb-0.5 pl-[9px]">
      {menus.map((m) => (
        <button key={m} type="button">
          {m}
        </button>
      ))}
    </nav>
    <div className="mb-px flex h-[25px] shrink-0 items-center bg-[#323842]">
      <button type="button" aria-label="모든 탭" className="ml-[7px] grid size-3 grid-cols-2 gap-0.5">
        <span className="bg-[#4c9cf0]" />
        <span className="bg-[#cdd2d9]" />
        <span className="bg-[#cdd2d9]" />
        <span className="bg-[#cdd2d9]" />
      </button>
      <button type="button" aria-label="새 탭" className="ml-[13px] mr-2.5">
        <Icon size={10} sw={1.2}>
          <path d="M0 5.500h10M5 .5v10" />
        </Icon>
      </button>
      <button type="button" className="w-[110px] pl-2 text-left text-[#a5abb4]">
        시작
      </button>
      <button type="button" className="w-[170px] pl-2 text-left text-xs text-[#a5abb4]">
        Drawing1
      </button>
      <div className="flex h-full w-[170px] items-center justify-between bg-[#4e596b] pl-2 pr-[7px]">
        <button type="button">아파트 평면도.dxf</button>
        <button type="button" aria-label="닫기">
          <Icon size={8} sw={1.2}>
            <path d="M.5.5l7 7M7.500.5l-7 7" />
          </Icon>
        </button>
      </div>
    </div>
    <div className="flex min-h-0 flex-1">
      <Sidebar />
      <Canvas />
      <aside className="flex w-[300px] shrink-0 flex-col overflow-hidden bg-[#3d4450]">
        <LayersPanel />
        <PropertiesPanel />
      </aside>
    </div>
    <StatusBar />
  </div>
);

export default App;
